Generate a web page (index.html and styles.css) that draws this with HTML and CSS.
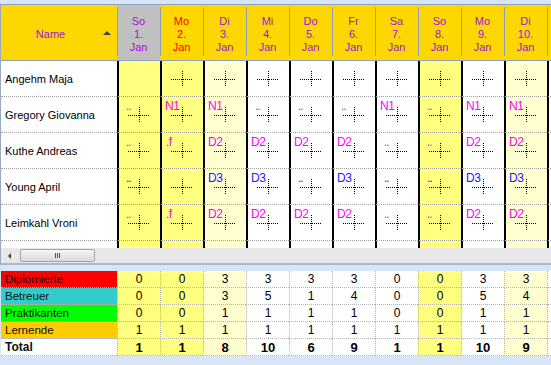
FILE: index.html
```html
<!DOCTYPE html>
<html>
<head>
<meta charset="utf-8">
<link rel="stylesheet" href="styles.css">
</head>
<body>
<div class="top"></div>
<div class="grid">
  <div class="h">
    <div class="hname"><span class="nm">Name</span><span class="sort"></span></div>
    <div class="hd g"><span>So</span><span>1.</span><span>Jan</span></div>
    <div class="hd r"><span>Mo</span><span>2.</span><span>Jan</span></div>
    <div class="hd"><span>Di</span><span>3.</span><span>Jan</span></div>
    <div class="hd"><span>Mi</span><span>4.</span><span>Jan</span></div>
    <div class="hd"><span>Do</span><span>5.</span><span>Jan</span></div>
    <div class="hd"><span>Fr</span><span>6.</span><span>Jan</span></div>
    <div class="hd"><span>Sa</span><span>7.</span><span>Jan</span></div>
    <div class="hd"><span>So</span><span>8.</span><span>Jan</span></div>
    <div class="hd"><span>Mo</span><span>9.</span><span>Jan</span></div>
    <div class="hd"><span>Di</span><span>10.</span><span>Jan</span></div>
    <div class="hd"></div>
  </div>

  <div class="row">
    <div class="n">Angehm Maja</div>
    <div class="c a"></div>
    <div class="c a x"></div>
    <div class="c b x"></div>
    <div class="c x"></div>
    <div class="c x"></div>
    <div class="c x"></div>
    <div class="c x"></div>
    <div class="c a x"></div>
    <div class="c x"></div>
    <div class="c b x"></div>
    <div class="c f"></div>
  </div>

  <div class="row">
    <div class="n">Gregory Giovanna</div>
    <div class="c a x"><span class="l m dd">..</span></div>
    <div class="c a x"><span class="l m">N1</span></div>
    <div class="c b x"><span class="l m">N1</span></div>
    <div class="c x"><span class="l m dd">..</span></div>
    <div class="c x"><span class="l m dd">..</span></div>
    <div class="c x"><span class="l m dd">..</span></div>
    <div class="c x"><span class="l m">N1</span></div>
    <div class="c a x"><span class="l m dd">..</span></div>
    <div class="c x"><span class="l m">N1</span></div>
    <div class="c b x"><span class="l m">N1</span></div>
    <div class="c f"></div>
  </div>

  <div class="row">
    <div class="n">Kuthe Andreas</div>
    <div class="c a x"><span class="l m dd">..</span></div>
    <div class="c a x"><span class="l m df">.f</span></div>
    <div class="c b x"><span class="l m">D2</span></div>
    <div class="c x"><span class="l m">D2</span></div>
    <div class="c x"><span class="l m">D2</span></div>
    <div class="c x"><span class="l m">D2</span></div>
    <div class="c x"><span class="l m dd">..</span></div>
    <div class="c a x"><span class="l m dd">..</span></div>
    <div class="c x"><span class="l m">D2</span></div>
    <div class="c b x"><span class="l m">D2</span></div>
    <div class="c f"></div>
  </div>

  <div class="row">
    <div class="n">Young April</div>
    <div class="c a x"><span class="l u dd">..</span></div>
    <div class="c a x"></div>
    <div class="c b x"><span class="l u">D3</span></div>
    <div class="c x"><span class="l u">D3</span></div>
    <div class="c x"><span class="l u dd">..</span></div>
    <div class="c x"><span class="l u">D3</span></div>
    <div class="c x"><span class="l u dd">..</span></div>
    <div class="c a x"><span class="l u dd">..</span></div>
    <div class="c x"><span class="l u">D3</span></div>
    <div class="c b x"><span class="l u">D3</span></div>
    <div class="c f"></div>
  </div>

  <div class="row">
    <div class="n">Leimkahl Vroni</div>
    <div class="c a x"><span class="l m dd">..</span></div>
    <div class="c a x"><span class="l m df">.f</span></div>
    <div class="c b x"><span class="l m">D2</span></div>
    <div class="c x"><span class="l m">D2</span></div>
    <div class="c x"><span class="l m">D2</span></div>
    <div class="c x"><span class="l m">D2</span></div>
    <div class="c x"><span class="l m dd">..</span></div>
    <div class="c a x"><span class="l m dd">..</span></div>
    <div class="c x"><span class="l m">D2</span></div>
    <div class="c b x"><span class="l m">D2</span></div>
    <div class="c f"></div>
  </div>

  <div class="row part">
    <div class="n"></div>
    <div class="c a"></div>
    <div class="c a"></div>
    <div class="c b"></div>
    <div class="c"></div>
    <div class="c"></div>
    <div class="c"></div>
    <div class="c"></div>
    <div class="c a"></div>
    <div class="c"></div>
    <div class="c b"></div>
    <div class="c f"></div>
  </div>

  <div class="sb">
    <span class="arr"></span>
    <span class="thumb"><span class="grip"></span></span>
  </div>
</div>

<div class="gap"></div>

<div class="s">
  <div class="sl red">Diplomierte</div>
  <div class="sv a">0</div><div class="sv a">0</div><div class="sv b">3</div><div class="sv">3</div><div class="sv">3</div><div class="sv">3</div><div class="sv">0</div><div class="sv a">0</div><div class="sv">3</div><div class="sv b">3</div><div class="sv"></div>

  <div class="sl teal">Betreuer</div>
  <div class="sv a">0</div><div class="sv a">0</div><div class="sv b">3</div><div class="sv">5</div><div class="sv">1</div><div class="sv">4</div><div class="sv">0</div><div class="sv a">0</div><div class="sv">5</div><div class="sv b">4</div><div class="sv"></div>

  <div class="sl green">Praktikanten</div>
  <div class="sv a">0</div><div class="sv a">0</div><div class="sv b">1</div><div class="sv">1</div><div class="sv">1</div><div class="sv">1</div><div class="sv">0</div><div class="sv a">0</div><div class="sv">1</div><div class="sv b">1</div><div class="sv"></div>

  <div class="sl orange">Lernende</div>
  <div class="sv a">1</div><div class="sv a">1</div><div class="sv b">1</div><div class="sv">1</div><div class="sv">1</div><div class="sv">1</div><div class="sv">1</div><div class="sv a">1</div><div class="sv">1</div><div class="sv b">1</div><div class="sv"></div>

  <div class="sl tot">Total</div>
  <div class="sv a t">1</div><div class="sv a t">1</div><div class="sv b t">8</div><div class="sv t">10</div><div class="sv t">6</div><div class="sv t">9</div><div class="sv t">1</div><div class="sv a t">1</div><div class="sv t">10</div><div class="sv b t">9</div><div class="sv t"></div>
</div>
</body>
</html>
```
FILE: styles.css
```css
html, body {
  margin: 0;
  padding: 0;
}
body {
  width: 551px;
  height: 365px;
  overflow: hidden;
  background: #d8e5f6;
  font-family: "Liberation Sans", Arial, sans-serif;
  font-size: 11px;
  color: #000;
}
.top {
  height: 4px;
}
.grid {
  background: #fff;
  border-top: 1px solid #8ea2bf;
  border-left: 1px solid #9aa8bc;
  border-bottom: 2px solid #a9b8cc;
}
.h {
  display: grid;
  grid-template-columns: 116px repeat(10, 43px) 1fr;
  height: 56px;
  box-sizing: border-box;
  background: #ffd700;
  border-bottom: 1px solid #8ea2bf;
}
.hname {
  display: flex;
  align-items: center;
  color: #a010d8;
  padding-top: 3px;
}
.nm {
  flex: 1;
  text-align: center;
}
.sort {
  width: 0;
  height: 0;
  border-left: 4px solid transparent;
  border-right: 4px solid transparent;
  border-bottom: 4px solid #3c4658;
  margin: 0 6px 2px 3px;
}
.hd {
  display: flex;
  flex-direction: column;
  align-items: center;
  justify-content: center;
  line-height: 13px;
  padding-top: 3px;
  color: #a010d8;
  background-image: linear-gradient(#8c9fbf, #8c9fbf);
  background-size: 1px 49px;
  background-position: 0 2px;
  background-repeat: no-repeat;
}
.hd.g {
  background-color: #c0c0c0;
}
.hd.r {
  color: #ff0000;
}
.row {
  display: grid;
  grid-template-columns: 116px repeat(10, 43px) 1fr;
  height: 36px;
}
.row > div {
  box-sizing: border-box;
  border-bottom: 1px dotted #a0a0a0;
}
.row.part {
  height: 7px;
}
.row.part > div {
  border-bottom: none;
}
.n {
  display: flex;
  align-items: center;
  padding-left: 4px;
  white-space: nowrap;
}
.c {
  border-left: 2px solid #000;
}
.a {
  background-color: #ffff80;
}
.b {
  background-color: #ffffd0;
}
.x {
  background-image:
    repeating-linear-gradient(to right, #000 0 1px, transparent 1px 2px),
    repeating-linear-gradient(to bottom, #000 0 1px, transparent 1px 2px);
  background-size: 22px 1px, 1px 16px;
  background-position: 9px 18px, 20px 10px;
  background-repeat: no-repeat;
}
.l {
  display: block;
  padding: 3px 0 0 3px;
  font-family: "Liberation Sans Narrow", "Liberation Sans", Arial, sans-serif;
  font-size: 12px;
  line-height: 12px;
  letter-spacing: -0.5px;
}
.m {
  color: #ff00ff;
}
.u {
  color: #2020ff;
}
.dd {
  padding-left: 7px;
  letter-spacing: -1px;
}
.df {
  padding-left: 4px;
}
.sb {
  height: 15px;
  background: #e8e8e8;
  display: flex;
  align-items: center;
}
.arr {
  width: 0;
  height: 0;
  border-top: 3px solid transparent;
  border-bottom: 3px solid transparent;
  border-right: 3px solid #404040;
  margin-left: 7px;
}
.thumb {
  margin-left: 9px;
  width: 75px;
  height: 13px;
  box-sizing: border-box;
  border: 1px solid #a4a4a4;
  border-radius: 2px;
  background: linear-gradient(#f6f6f6, #dadada);
  display: flex;
  align-items: center;
  justify-content: center;
}
.grip {
  width: 5px;
  height: 5px;
  background: repeating-linear-gradient(to right, #555 0 1px, transparent 1px 2px);
}
.gap {
  height: 6px;
}
.s {
  display: grid;
  grid-template-columns: 116px repeat(10, 43px) 1fr;
  grid-auto-rows: 17px;
  margin-left: 1px;
}
.s > div {
  box-sizing: border-box;
  border-bottom: 1px dotted #b4b4b4;
  padding-top: 1px;
  line-height: 15px;
}
.sl {
  padding-left: 4px;
  color: #111;
  font-size: 11.5px;
}
.red {
  background: #ff0000;
  color: #200000;
}
.teal {
  background: #33cccc;
}
.green {
  background: #00ff00;
}
.orange {
  background: #ffcc00;
}
.tot {
  background: #fff;
  font-weight: bold;
  font-size: 12px;
}
.sv {
  border-left: 1px dotted #b4b4b4;
  text-align: center;
  font-size: 12px;
  background-color: #fff;
}
.sv.a {
  background-color: #ffff80;
}
.sv.b {
  background-color: #ffffd0;
}
.sv.t {
  font-weight: bold;
  font-size: 13px;
}
```
